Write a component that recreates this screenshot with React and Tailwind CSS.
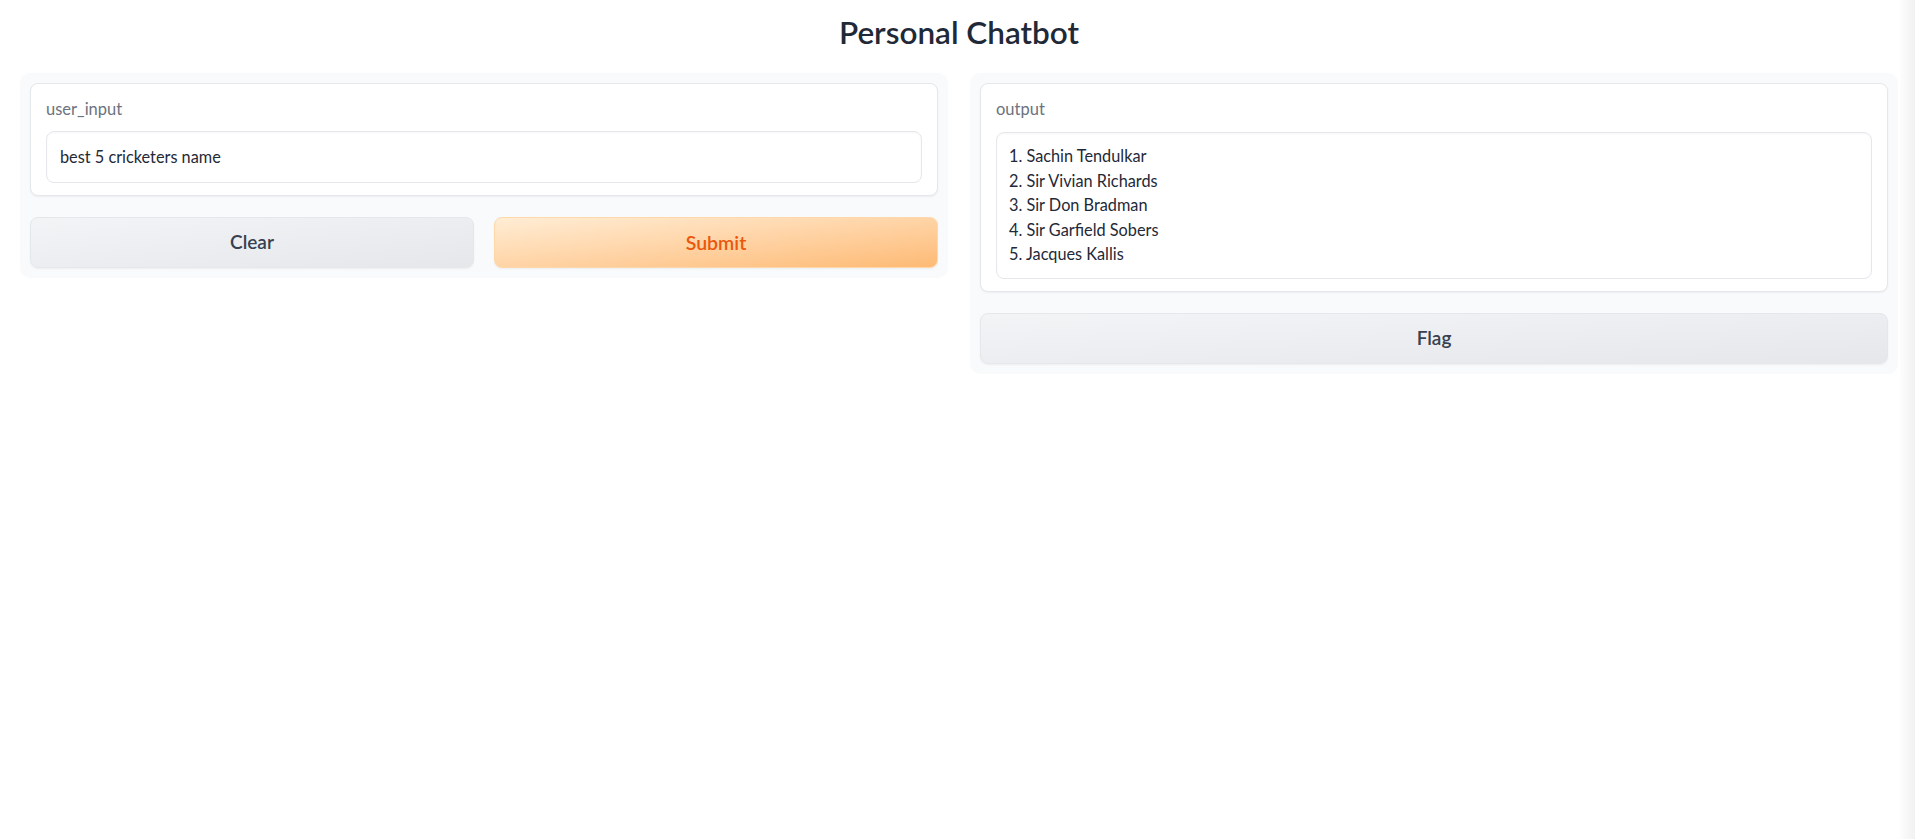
import React from "react";

const font = { fontFamily: "Lato, 'Open Sans', sans-serif" };

export default function App() {
  return (
    <div className="flex min-h-[839px] w-full bg-white text-[#1f2937]" style={font}>
      <div className="flex-1 pl-[20px] pr-[2px]">
        <h1 className="flex h-[73px] items-center justify-center pb-[8px] text-[31.5px] font-semibold text-[#1f2937]">
          Personal Chatbot
        </h1>
        <div className="flex items-start gap-[22px]">
          <div className="flex flex-1 flex-col gap-[21px] rounded-[10px] bg-[#f9fafb] p-[10px]">
            <div className="rounded-[8px] border border-[#e5e7eb] bg-white px-[15px] pt-[14px] pb-[12px] shadow-[0_1px_2px_rgba(0,0,0,0.05)]">
              <div className="mb-[11px] h-[22px] text-[16.5px] leading-[22px] text-[#6b7280]">user_input</div>
              <div className="flex h-[52px] items-center rounded-[8px] border border-[#e5e7eb] bg-white px-[13px] text-[16.3px] text-[#1f2937] shadow-[inset_0_1px_2px_rgba(0,0,0,0.04)]">
                best 5 cricketers name
              </div>
            </div>
            <div className="flex gap-[20px]">
              <button className="flex h-[51px] flex-1 items-center justify-center rounded-[8px] border border-[#e5e7eb] bg-gradient-to-br from-[#f3f4f6] to-[#e5e7eb] text-[19px] font-semibold text-[#374151] shadow-[0_1px_2px_rgba(0,0,0,0.05)]">
                Clear
              </button>
              <button className="flex h-[51px] flex-1 items-center justify-center rounded-[8px] border border-[#fed7aa] bg-gradient-to-br from-[#ffedd5] to-[#fdba74] text-[19.5px] font-semibold text-[#ea580c] shadow-[0_1px_2px_rgba(0,0,0,0.05)]">
                Submit
              </button>
            </div>
          </div>
          <div className="flex flex-1 flex-col gap-[21px] rounded-[10px] bg-[#f9fafb] p-[10px]">
            <div className="rounded-[8px] border border-[#e5e7eb] bg-white px-[15px] pt-[14px] pb-[12px] shadow-[0_1px_2px_rgba(0,0,0,0.05)]">
              <div className="mb-[12px] h-[22px] text-[16.5px] leading-[22px] text-[#6b7280]">output</div>
              <div className="rounded-[8px] border border-[#e5e7eb] bg-white px-[12px] py-[11px] text-[16.3px] leading-[24.5px] text-[#1f2937] shadow-[inset_0_1px_2px_rgba(0,0,0,0.04)]">
                <div>1. Sachin Tendulkar</div>
                <div>2. Sir Vivian Richards</div>
                <div>3. Sir Don Bradman</div>
                <div>4. Sir Garfield Sobers</div>
                <div>5. Jacques Kallis</div>
              </div>
            </div>
            <button className="flex h-[51px] w-full items-center justify-center rounded-[8px] border border-[#e5e7eb] bg-gradient-to-br from-[#f3f4f6] to-[#e5e7eb] text-[19px] font-semibold text-[#374151] shadow-[0_1px_2px_rgba(0,0,0,0.05)]">
              Flag
            </button>
          </div>
        </div>
      </div>
      <div className="w-[15px] bg-gradient-to-r from-[#fdfdfd] to-[#f1f1f1]" />
    </div>
  );
}
